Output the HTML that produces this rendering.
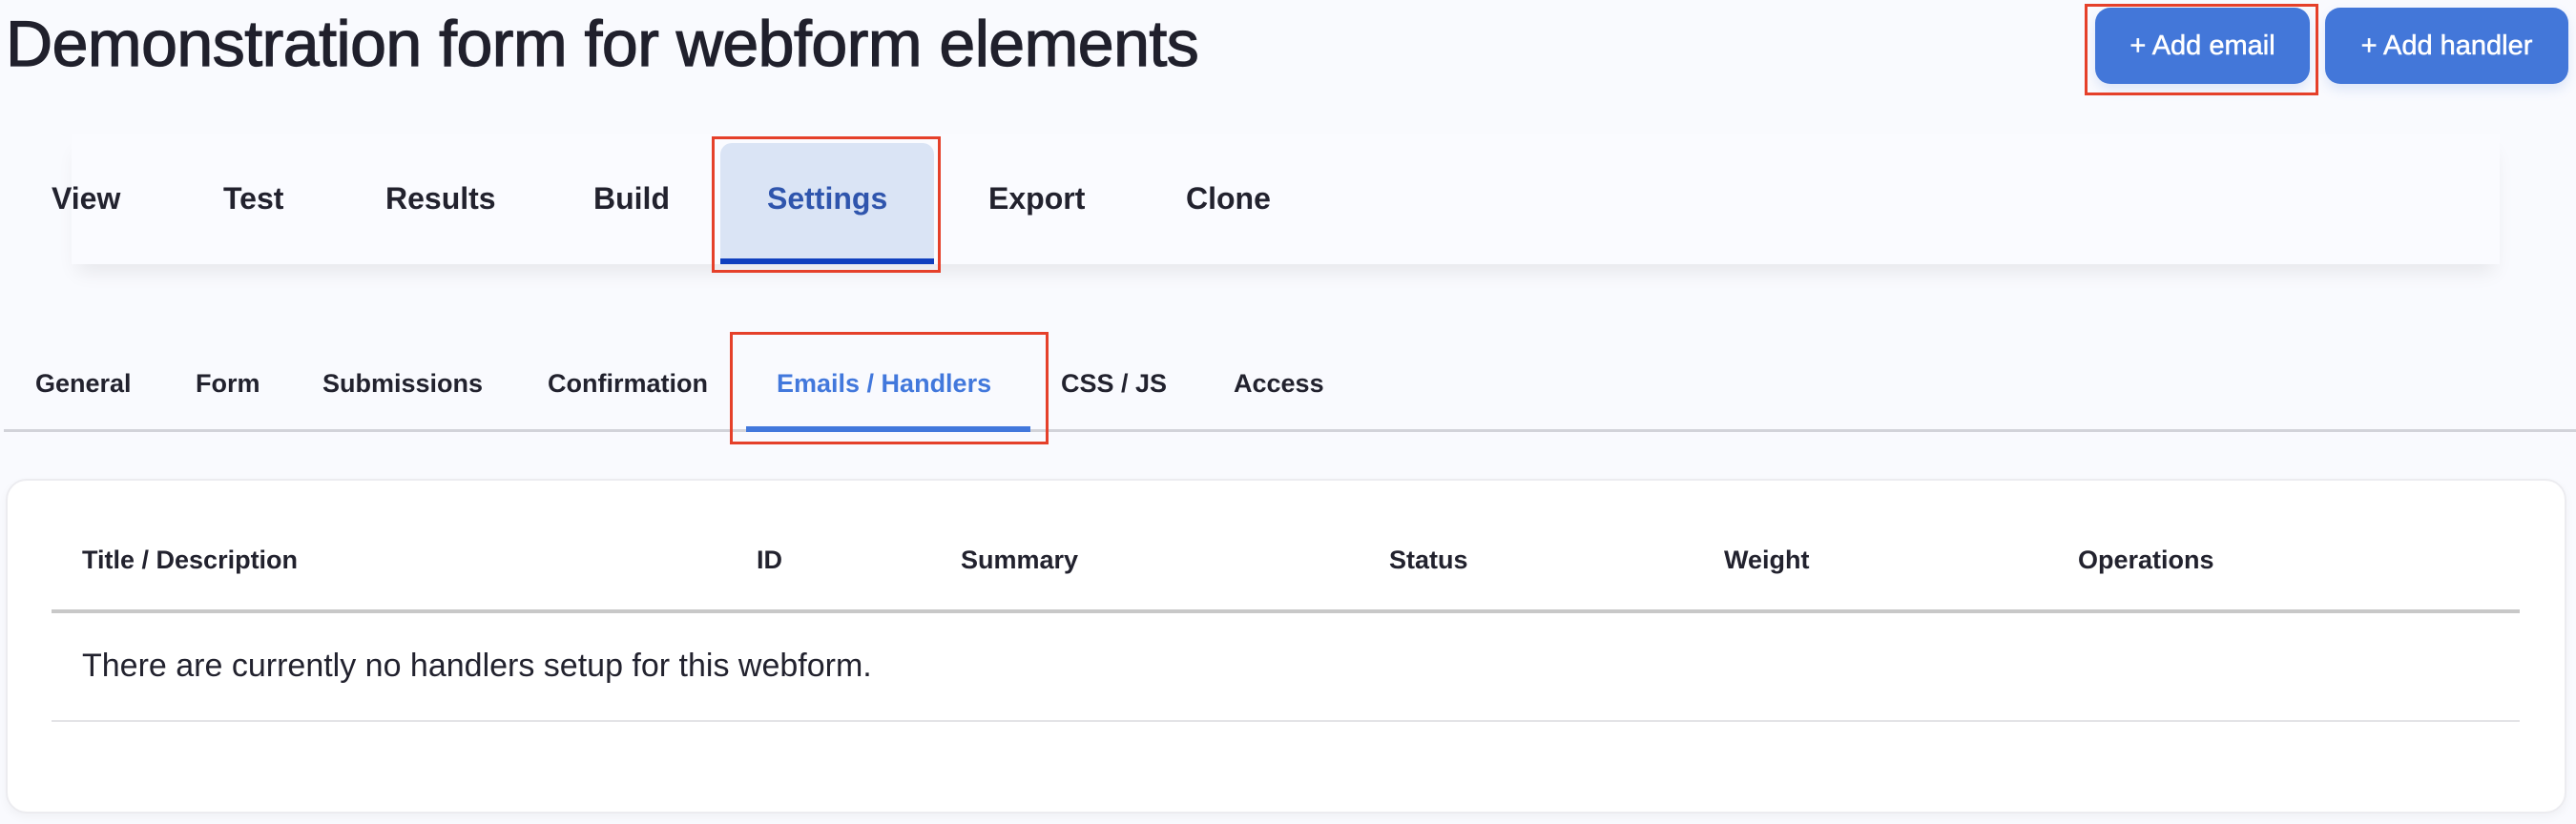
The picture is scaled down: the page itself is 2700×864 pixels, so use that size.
<!DOCTYPE html>
<html><head><meta charset="utf-8"><style>
*{margin:0;padding:0;box-sizing:border-box}
body{width:2700px;height:864px;background:#f9fafe;font-family:"Liberation Sans",sans-serif;color:#22222e;position:relative;overflow:hidden}
.a{position:absolute;white-space:nowrap}
h1{position:absolute;left:6px;top:7px;font-size:68px;font-weight:normal;letter-spacing:-0.5px;color:#20202c;-webkit-text-stroke:1.2px #20202c}
.btn{position:absolute;top:8px;height:80px;background:#4377d9;border-radius:16px;color:#fff;font-size:29px;-webkit-text-stroke:0.5px #fff;display:flex;align-items:center;justify-content:center;box-shadow:0 6px 12px rgba(67,119,217,.15)}
.red{position:absolute;border:3px solid #e5402a}
.strip{position:absolute;left:75px;top:140px;width:2545px;height:137px;background:#fafbff;box-shadow:0 14px 20px -6px rgba(0,0,0,.08)}
.t1{font-size:32px;font-weight:bold;top:190px}
.t2{font-size:27px;font-weight:bold;top:387px}
.th{font-size:27px;font-weight:bold;top:572px}
</style></head><body>
<h1>Demonstration form for webform elements</h1>
<div class="btn" style="left:2196px;width:225px">+ Add email</div>
<div class="btn" style="left:2437px;width:255px">+ Add handler</div>
<div class="red" style="left:2185px;top:4px;width:245px;height:96px"></div>

<div class="strip"></div>
<div class="a" style="left:755px;top:150px;width:224px;height:127px;background:#dae4f5;border-radius:12px 12px 0 0"></div>
<div class="a" style="left:755px;top:271px;width:224px;height:6px;background:#1040bf"></div>
<div class="red" style="left:746px;top:143px;width:240px;height:143px"></div>
<div class="a t1" style="left:54px">View</div>
<div class="a t1" style="left:234px">Test</div>
<div class="a t1" style="left:404px">Results</div>
<div class="a t1" style="left:622px">Build</div>
<div class="a t1" style="left:804px;color:#2f55ad">Settings</div>
<div class="a t1" style="left:1036px">Export</div>
<div class="a t1" style="left:1243px">Clone</div>

<div class="a" style="left:4px;top:450px;width:2696px;height:3px;background:#d2d3d9"></div>
<div class="a" style="left:782px;top:447px;width:298px;height:6px;background:#4278dc"></div>
<div class="red" style="left:765px;top:348px;width:334px;height:118px"></div>
<div class="a t2" style="left:37px">General</div>
<div class="a t2" style="left:205px">Form</div>
<div class="a t2" style="left:338px">Submissions</div>
<div class="a t2" style="left:574px">Confirmation</div>
<div class="a t2" style="left:814px;color:#4278dc">Emails / Handlers</div>
<div class="a t2" style="left:1112px">CSS / JS</div>
<div class="a t2" style="left:1293px">Access</div>

<div class="a" style="left:6px;top:502px;width:2684px;height:351px;background:#fff;border:2px solid #ececf0;border-radius:22px;box-shadow:0 4px 10px rgba(0,0,0,.04)"></div>
<div class="a th" style="left:86px">Title / Description</div>
<div class="a th" style="left:793px">ID</div>
<div class="a th" style="left:1007px">Summary</div>
<div class="a th" style="left:1456px">Status</div>
<div class="a th" style="left:1807px">Weight</div>
<div class="a th" style="left:2178px">Operations</div>
<div class="a" style="left:54px;top:639px;width:2587px;height:4px;background:#c8c8c8"></div>
<div class="a" style="left:86px;top:679px;font-size:34px">There are currently no handlers setup for this webform.</div>
<div class="a" style="left:54px;top:755px;width:2587px;height:2px;background:#e3e3e6"></div>
</body></html>
